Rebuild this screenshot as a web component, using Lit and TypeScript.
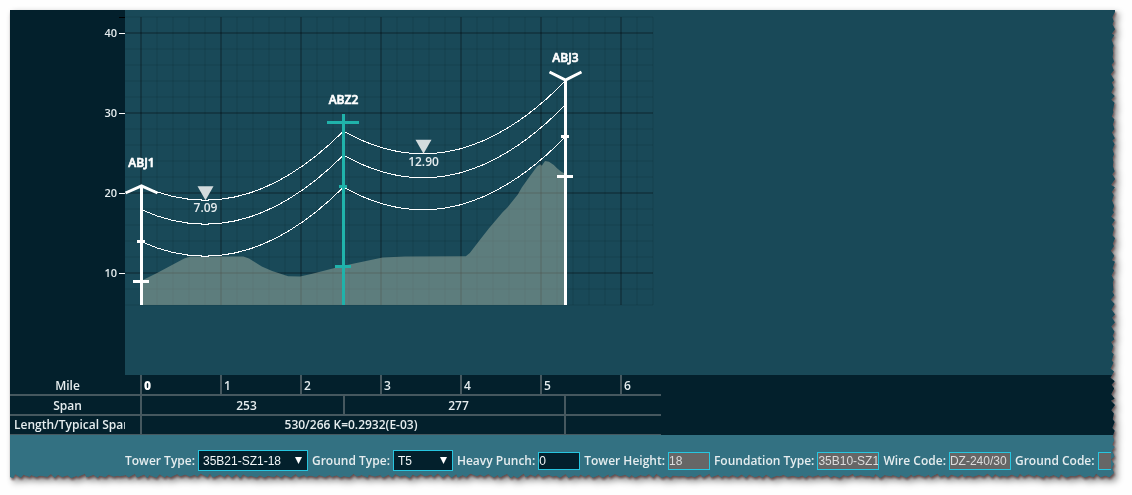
import { LitElement, html, svg, css } from "lit";
import { customElement, property } from "lit/decorators.js";
import { classMap } from "lit/directives/class-map.js";
import { styleMap } from "lit/directives/style-map.js";

/* ---------- scales: one mile unit is 80px, one metre of height is 8px ---------- */
const sx = (mile: number) => 131 + mile * 80;
const sy = (height: number) => 343 - height * 8;
const BASE = sy(6);

interface Tower {
  name: string;
  mile: number;
  top: number;
  shape: "roof" | "cross" | "vee";
  ticks: { at: number; half: number }[];
}

const towers: Tower[] = [
  { name: "ABJ1", mile: 0, top: 21, shape: "roof", ticks: [{ at: 14, half: 4 }, { at: 9, half: 8 }] },
  {
    name: "ABZ2", mile: 2.525, top: 29.875, shape: "cross",
    ticks: [{ at: 28.875, half: 16 }, { at: 20.875, half: 4 }, { at: 10.875, half: 8 }],
  },
  { name: "ABJ3", mile: 5.3, top: 34.125, shape: "vee", ticks: [{ at: 27.125, half: 4 }, { at: 22.125, half: 8 }] },
];

interface Sag {
  from: number;
  to: number;
  low: number;
  label: string;
  lows: number[];
}

const sags: Sag[] = [
  { from: 0, to: 2.525, low: 0.8, label: "7.09", lows: [19.1, 16.1, 12.1] },
  { from: 2.525, to: 5.3, low: 3.525, label: "12.90", lows: [24.9, 21.9, 17.9] },
];

const terrain: [number, number][] = [
  [0, 9], [0.2, 10], [0.54, 11.8], [0.62, 12.05], [1.28, 12.05], [1.35, 11.8], [1.51, 10.8],
  [1.64, 10.25], [1.84, 9.6], [1.99, 9.55], [2.14, 9.9], [2.53, 10.9], [3.02, 11.95], [3.3, 12.05],
  [4.06, 12.1], [4.11, 12.5], [4.24, 14.2], [4.35, 15.6], [4.52, 17.6], [4.58, 18.2], [4.71, 19.8],
  [4.76, 20.7], [4.84, 21.8], [4.95, 23.3], [4.99, 23.6], [5.01, 23.4], [5.05, 24], [5.1, 23.9],
  [5.16, 23.5], [5.2, 23.1], [5.25, 22.7], [5.3, 22.4],
];

function range(from: number, to: number, step: number): number[] {
  const out: number[] = [];
  for (let v = from; v <= to; v += step) out.push(v);
  return out;
}

/* A conductor is a parabola, drawn exactly by one quadratic segment. */
function conductor(s: Sag, low: number): string {
  const k = 0.0036;
  const x0 = sx(s.from) + 0.5, x1 = sx(s.to) + 0.5, xm = sx(s.low), ym = sy(low);
  const y = (x: number) => ym - k * (x - xm) ** 2;
  const cx = (x0 + x1) / 2;
  const cy = y(x0) - 2 * k * (x0 - xm) * (cx - x0);
  return `M${x0} ${y(x0)}Q${cx} ${cy} ${x1} ${y(x1)}`;
}

@customElement("profile-chart")
class ProfileChart extends LitElement {
  static styles = css`
    :host {
      display: block;
      background: linear-gradient(to right, #03202c 115px, #194958 115px);
    }
    svg { display: block; }
    text { font: 600 12px "Open Sans", "Noto Sans", sans-serif; fill: #e6edef; text-anchor: middle; }
    .scale { font-size: 11px; text-anchor: end; }
    .name { fill: #fff; stroke: #fff; stroke-width: 0.6px; }
    .minor { stroke: #000; stroke-opacity: 0.05; stroke-width: 2; }
    .major { stroke: #000; stroke-opacity: 0.24; stroke-width: 2; }
    .tick { stroke: #fff; }
    .end { stroke: #000; }
    .ground { fill: #cdd2bb; fill-opacity: 0.38; }
    .wire { fill: none; stroke: #fff; shape-rendering: crispEdges; }
    .tower { fill: none; stroke: #fff; stroke-width: 3; }
    .cross { stroke: #20b2aa; }
    .mark { fill: #d3dbdd; }
  `;

  private grid() {
    const left = 115, right = 643, top = 7;
    return svg`
      ${range(0, 32, 1).map((i) => svg`<line class=${i % 5 ? "minor" : "major"}
        x1=${sx(i / 5)} x2=${sx(i / 5)} y1=${top} y2=${BASE} />`)}
      ${range(6, 42, 2).map((v) => svg`<line class=${v % 10 ? "minor" : "major"}
        x1=${left} x2=${right} y1=${sy(v)} y2=${sy(v)} />`)}
      <line class="end" x1="109" x2="115" y1="7.5" y2="7.5" />
      ${[10, 20, 30, 40].map((v) => svg`
        <line class="tick" x1="109" x2="115" y1=${sy(v) + 0.5} y2=${sy(v) + 0.5} />
        <text class="scale" x="107" y=${sy(v) + 4}>${v}</text>`)}`;
  }

  private tower(t: Tower) {
    const x = sx(t.mile) + 0.5, y = sy(t.top);
    const arms =
      t.shape === "roof" ? `M${x - 16} ${y + 8}L${x} ${y + 1}L${x + 16} ${y + 8}`
      : t.shape === "vee" ? `M${x - 16} ${y - 8}L${x} ${y}L${x + 16} ${y - 8}` : "";
    const ticks = t.ticks.map((k) => `M${x - k.half - 0.5} ${sy(k.at) + 0.5}h${k.half * 2}`).join("");
    return svg`
      <path class=${t.shape === "cross" ? "tower cross" : "tower"} d="M${x} ${y}V${BASE}${arms}${ticks}" />
      <text class="name" x=${x} y=${y - (t.shape === "cross" ? 10 : 18)}>${t.name}</text>`;
  }

  render() {
    const ground = terrain.map(([m, h]) => `${sx(m)} ${sy(h)}`).join("L");
    return html`<svg width="651" height="365" role="img" aria-label="Line profile">
      ${this.grid()}
      <path class="ground" d="M${sx(0)} ${BASE}L${ground}V${BASE}Z" />
      ${sags.map((s) => s.lows.map((l) => svg`<path class="wire" d=${conductor(s, l)} />`))}
      ${sags.map((s) => {
        const x = sx(s.low) + 0.5, y = sy(s.lows[0]);
        return svg`<path class="mark" d="M${x - 8} ${y - 14}h16l-8 14z" />
          <text x=${x} y=${y + 12}>${s.label}</text>`;
      })}
      ${towers.map((t) => this.tower(t))}
    </svg>`;
  }
}

@customElement("span-table")
class SpanTable extends LitElement {
  static styles = css`
    :host { display: block; background: #03202c; }
    table {
      width: 651px;
      table-layout: fixed;
      border-collapse: separate;
      border-spacing: 0;
      font: 600 12px/18px "Open Sans", "Noto Sans", sans-serif;
      color: #e6edef;
    }
    th, td {
      box-sizing: border-box;
      height: 20px;
      padding: 0;
      border-bottom: 2px solid #46585f;
      font-weight: 600;
      text-align: center;
      white-space: nowrap;
      overflow: hidden;
    }
    tr:first-child > * { height: 21px; padding-top: 2px; line-height: 17px; }
    tr:nth-child(2) > * { padding-top: 1px; line-height: 17px; }
    tr:last-child > * { height: 19px; border-bottom-width: 1px; }
    .long { padding-left: 4px; text-align: left; }
    .bar { border-left: 2px solid #46585f; }
    .span { padding-left: 8px; }
    .total { padding-right: 4px; }
    .mile { padding-left: 2px; text-align: left; }
    .origin { font-weight: 800; color: #fff; }
    .axis { width: 115px; }
    .lead { width: 15px; }
    .full { width: 80px; }
    .a { width: 43px; }
    .b { width: 37px; }
    .c { width: 24px; }
    .d { width: 56px; }
  `;

  render() {
    return html`<table>
      <colgroup>
        <col class="axis"><col class="lead"><col class="full"><col class="full">
        <col class="a"><col class="b"><col class="full"><col class="full">
        <col class="c"><col class="d"><col>
      </colgroup>
      <tbody>
        <tr>
          <th scope="row">Mile</th><td></td>
          ${[1, 1, 2, 1, 1, 2, 1].map((span, i) => html`<td colspan=${span}
            class=${classMap({ bar: true, mile: true, origin: i === 0 })}>${i}</td>`)}
        </tr>
        <tr>
          <th scope="row">Span</th><td></td>
          <td class="bar span" colspan="3">253</td>
          <td class="bar span" colspan="4">277</td>
          <td class="bar" colspan="2"></td>
        </tr>
        <tr>
          <th scope="row" class="long">Length/Typical Span</th><td></td>
          <td class="bar total" colspan="7">530/266 K=0.2932(E-03)</td>
          <td class="bar" colspan="2"></td>
        </tr>
      </tbody>
    </table>`;
  }
}

@customElement("tower-form")
class TowerForm extends LitElement {
  static styles = css`
    :host { display: block; background: #337182; }
    form {
      display: flex;
      align-items: center;
      gap: 3px;
      margin-right: 4px;
      overflow: hidden;
      padding: 15px 0 7px 115px;
      font: 600 12px/20px "Open Sans", "Noto Sans", sans-serif;
      color: #e6edef;
      white-space: nowrap;
    }
    label { flex: none; }
    .pick, input { flex: none; margin: 0 1px 0 0; }
    input, select {
      box-sizing: border-box;
      border: 1px solid #27c6e0;
      border-radius: 0;
      background: #03202c;
      color: #f2f6f7;
      font: 12px "Liberation Sans", Arial, sans-serif;
    }
    input { width: 42px; height: 18px; padding: 0; }
    input[readonly] { background: #666; color: #dcdcdc; }
    .wide { width: 62px; }
    select { width: 100%; height: 21px; margin: 0; padding: 0 4px; appearance: none; }
    .pick { position: relative; display: flex; width: 60px; }
    .big { width: 110px; }
    .arrow { position: absolute; right: 6px; top: 7px; pointer-events: none; fill: #fff; }
  `;

  private pick(id: string, label: string, value: string, big = false) {
    return html`<label for=${id}>${label}:</label>
      <span class=${classMap({ pick: true, big })}>
        <select id=${id}><option selected>${value}</option></select>
        <svg class="arrow" width="7" height="7" aria-hidden="true"><path d="M0 0h7L3.5 7z" /></svg>
      </span>`;
  }

  private box(id: string, label: string, value: string, wide = true, locked = true) {
    return html`<label for=${id}>${label}:</label>
      <input id=${id} class=${classMap({ wide })} .value=${value} ?readonly=${locked}>`;
  }

  render() {
    return html`<form>
      ${this.pick("tower", "Tower Type", "35B21-SZ1-18", true)}
      ${this.pick("ground", "Ground Type", "T5")}
      ${this.box("punch", "Heavy Punch", "0", false, false)}
      ${this.box("height", "Tower Height", "18", false)}
      ${this.box("foundation", "Foundation Type", "35B10-SZ1")}
      ${this.box("wire", "Wire Code", "DZ-240/30")}
      ${this.box("ground-code", "Ground Code", "")}
    </form>`;
  }
}

/* Torn paper outline along the right and bottom sides of the sheet. */
function tornOutline(): string {
  const noise = (i: number) => Math.abs(Math.sin(i * 127.1) * 43758.5) % 1;
  const bite = (i: number) => (i % 2 ? 2 + noise(i) * 2.5 : noise(i) * 1.8);
  const points = ["0 0", "100% 0"];
  for (let i = 0; i <= 110; i++) {
    const at = ((i + noise(i + 500) * 0.8) * 98.5) / 110;
    points.push(`calc(100% - ${bite(i).toFixed(1)}px) ${at.toFixed(2)}%`);
  }
  for (let i = 260; i >= 0; i--) {
    const at = ((i + noise(i + 900) * 0.8) * 99.3) / 260;
    points.push(`${at.toFixed(2)}% calc(100% - ${bite(i + 40).toFixed(1)}px)`);
  }
  points.push("0 calc(100% - 1px)");
  return `polygon(${points.join(",")})`;
}

@customElement("app-root")
class AppRoot extends LitElement {
  @property({ attribute: false }) outline = tornOutline();

  static styles = css`
    :host { display: block; background: #fefefe; padding: 10px 17px 17px 10px; }
    .shadow {
      filter: drop-shadow(1px 2px 1px rgba(90, 60, 60, 0.8)) drop-shadow(3px 3px 3px rgba(0, 0, 0, 0.45));
    }
    .sheet { overflow: hidden; background: #337182; }
  `;

  render() {
    return html`<main class="shadow">
      <div class="sheet" style=${styleMap({ clipPath: this.outline })}>
        <profile-chart></profile-chart>
        <span-table></span-table>
        <tower-form></tower-form>
      </div>
    </main>`;
  }
}
